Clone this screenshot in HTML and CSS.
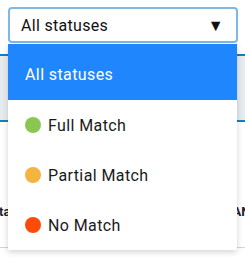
FILE: index.html
```html
<!DOCTYPE html>
<html lang="en">
<head>
    <meta charset="UTF-8">
    <meta name="viewport" content="width=device-width, initial-scale=1.0">
    <title>Status filter</title>
    <link rel="stylesheet" href="styles.css">
</head>
<body>
    <div class="page">
        <div class="select">
            <span>All statuses</span>
            <span class="arrow">▼</span>
        </div>

        <div class="table-head">
            <div class="head-line"></div>
        </div>

        <div class="table-row">
            <span class="cell first">Status</span>
            <span class="cell last">CHANNEL</span>
        </div>

        <div class="menu">
            <div class="option selected">All statuses</div>
            <div class="option"><span class="dot full"></span>Full Match</div>
            <div class="option"><span class="dot partial"></span>Partial Match</div>
            <div class="option"><span class="dot none"></span>No Match</div>
        </div>
    </div>
</body>
</html>
```

FILE: styles.css
```css
body {
    margin: 0;
    font-family: Roboto, "Liberation Sans", sans-serif;
    background: #fff;
}

.page {
    position: relative;
    width: 245px;
    height: 258px;
    overflow: hidden;
    padding-top: 7px;
    box-sizing: border-box;
}

.select {
    margin: 0 7px 0 8px;
    height: 36px;
    box-sizing: border-box;
    border: 2px solid #7db9e4;
    border-radius: 4px;
    display: flex;
    align-items: center;
    justify-content: space-between;
    padding: 0 12px 0 11px;
    font-size: 16px;
    letter-spacing: 0.3px;
    color: #111;
}

.arrow {
    font-size: 16px;
    margin-top: 1px;
}

.table-head {
    margin-top: 1px;
    height: 66px;
    background: #e6ebee;
    border-bottom: 2px solid #1b7cbd;
}

.head-line {
    margin-top: 11px;
    height: 2px;
    background: #1b7cbd;
}

.table-row {
    height: 126px;
    box-sizing: border-box;
    border-bottom: 1px solid #d4d4d4;
    display: flex;
    align-items: flex-end;
    padding-bottom: 28px;
    font-size: 13px;
    font-weight: bold;
    color: #222;
    white-space: nowrap;
}

.cell.first {
    margin-left: -9px;
}

.cell.last {
    margin-left: auto;
    margin-right: -29px;
}

.menu {
    position: absolute;
    left: 8px;
    top: 44px;
    width: 229px;
    background: #fff;
    box-shadow: 0 2px 6px rgba(0, 0, 0, 0.18);
}

.option {
    height: 50px;
    display: flex;
    align-items: center;
    gap: 7px;
    padding-left: 17px;
    font-size: 16px;
    letter-spacing: 0.4px;
    color: #1a1a1a;
}

.option.selected {
    height: 56px;
    box-sizing: border-box;
    padding-top: 4px;
    background: #2086fd;
    color: #fff;
}

.dot {
    width: 16px;
    height: 16px;
    border-radius: 50%;
}

.dot.full {
    background: #8bc653;
}

.dot.partial {
    background: #f3b440;
}

.dot.none {
    background: #ff4a0a;
}
```
